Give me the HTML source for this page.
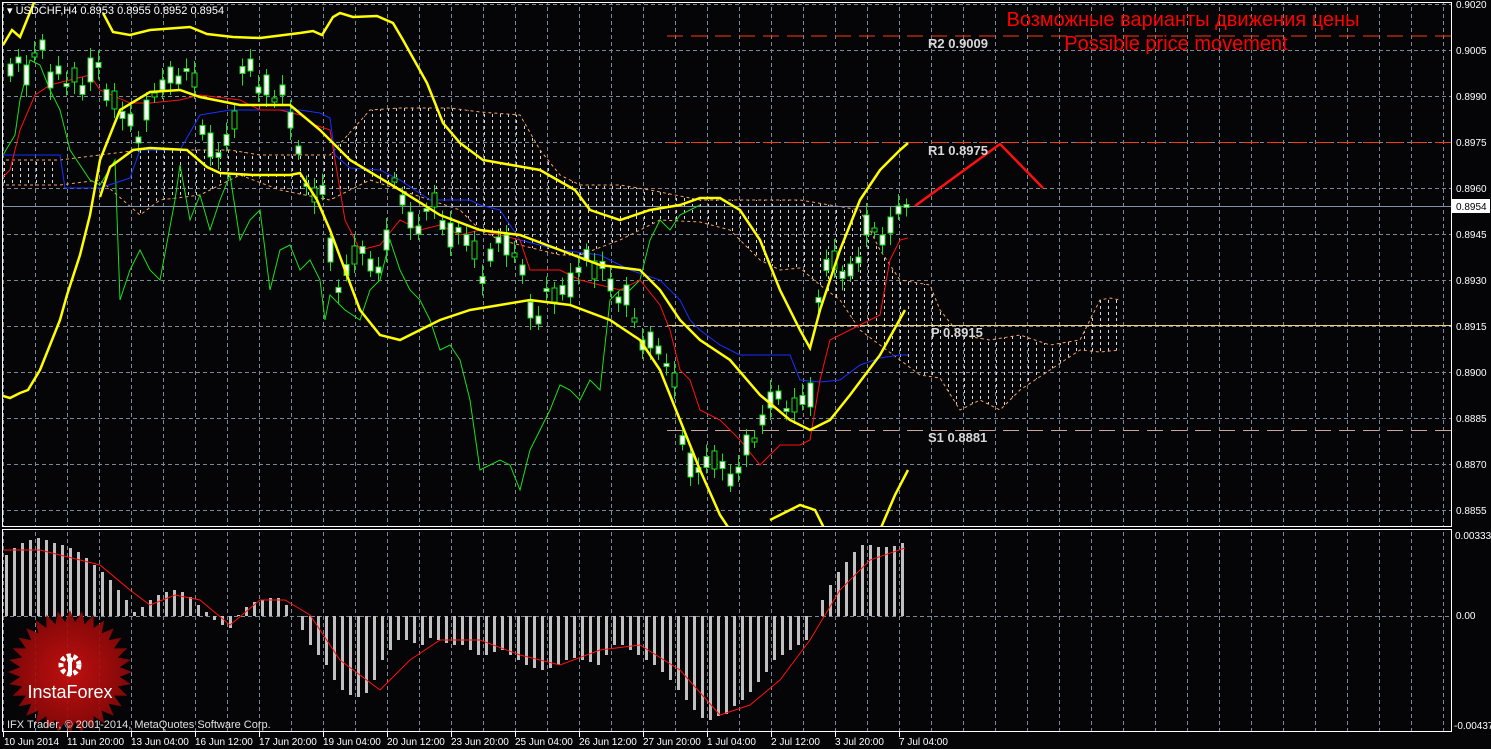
<!DOCTYPE html>
<html><head><meta charset="utf-8"><style>
html,body{margin:0;padding:0;background:#000;width:1491px;height:749px;overflow:hidden}
svg{display:block}
text{font-family:"Liberation Sans",sans-serif}
</style></head><body>
<svg id="s" width="1491" height="749" viewBox="0 0 1491 749" xmlns="http://www.w3.org/2000/svg">
<defs>
<pattern id="vg" x="3" y="0" width="32" height="749" patternUnits="userSpaceOnUse"><line x1="0.5" y1="0" x2="0.5" y2="749" stroke="#7a8899" stroke-dasharray="4,3"/></pattern>
<pattern id="hg" x="0" y="4" width="1491" height="46" patternUnits="userSpaceOnUse"><line x1="0" y1="0.5" x2="1491" y2="0.5" stroke="#7a8899" stroke-dasharray="4,3"/></pattern>
<pattern id="hatch" x="0" y="0" width="8" height="749" patternUnits="userSpaceOnUse"><line x1="4.5" y1="0" x2="4.5" y2="749" stroke="#d8d8d8" stroke-dasharray="3,3"/></pattern>
<radialGradient id="rg"><stop offset="0" stop-color="#d01010"/><stop offset="1" stop-color="#8a0808"/></radialGradient>
<clipPath id="mc"><rect x="3" y="3" width="1448" height="523"/></clipPath>
<clipPath id="dc"><rect x="3" y="530" width="1448" height="201"/></clipPath>
</defs>
<rect width="1491" height="749" fill="#050407"/>
<rect x="3" y="3" width="1448" height="523" fill="url(#vg)"/>
<rect x="3" y="3" width="1448" height="523" fill="url(#hg)"/>
<rect x="3" y="530" width="1448" height="201" fill="url(#vg)"/>
<line x1="3" y1="616.5" x2="1451" y2="616.5" stroke="#7a8899" stroke-dasharray="4,3"/>
<g clip-path="url(#mc)">
<polygon fill="url(#hatch)" points="370,110 400,108 450,108 480,112 520,115 540,150 560,175 580,185 620,185 650,190 700,200 760,200 800,200 830,205 860,210 880,250 900,280 930,285 940,310 960,335 990,340 1020,335 1050,345 1080,340 1100,300 1110,298 1120,300 1120,350 1100,352 1080,350 1050,370 1020,390 1000,410 980,400 960,410 940,378 920,375 900,360 880,345 860,330 840,300 820,285 800,268 780,270 760,260 730,230 700,222 660,220 620,240 580,255 560,255 540,250 500,240 480,230 460,210 430,200 400,190 370,180"/>
<polygon fill="url(#hatch)" points="140,150 200,150 230,150 260,155 330,155 370,110 370,180 330,200 280,190 240,175 200,195 160,200 140,215"/>
<polygon fill="url(#hatch)" points="0,160 60,160 60,185 0,185"/>
<polyline fill="none" stroke="#f4a460" stroke-dasharray="3,3" points="0,160 60,160 140,150 200,150 230,150 260,155 330,155 370,110 400,108 450,108 480,112 520,115 540,150 560,175 580,185 620,185 650,190 700,200 760,200 800,200 830,205 860,210 880,250 900,280 930,285 940,310 960,335 990,340 1020,335 1050,345 1080,340 1100,300 1110,298 1120,300"/>
<polyline fill="none" stroke="#f4a460" stroke-dasharray="3,3" points="0,185 60,185 100,180 140,215 160,200 200,195 240,175 280,190 330,200 370,180 400,190 430,200 460,210 480,230 500,240 540,250 560,255 580,255 620,240 660,220 700,222 730,230 760,260 780,270 800,268 820,285 840,300 860,330 880,345 900,360 920,375 940,378 960,410 980,400 1000,410 1020,390 1050,370 1080,350 1100,352 1120,350"/>
<line x1="667" y1="36" x2="1451" y2="36" stroke="#ff3a10" stroke-dasharray="16,8"/>
<line x1="667" y1="142.5" x2="1451" y2="142.5" stroke="#ff3a10" stroke-dasharray="16,8"/>
<line x1="667" y1="325.5" x2="1451" y2="325.5" stroke="#f0d070"/>
<line x1="667" y1="430.5" x2="1451" y2="430.5" stroke="#c8a898" stroke-dasharray="16,8"/>
<line x1="3" y1="206.5" x2="1451" y2="206.5" stroke="#8090a8"/>
<polyline fill="none" stroke="#18e018" points="0,160 15,135 20,100 30,60 40,65 50,90 60,110 70,150 90,180 100,185 115,160 120,300 130,270 140,250 150,270 160,280 175,200 180,165 190,220 200,195 210,230 220,200 230,175 240,240 250,220 260,210 270,290 280,250 290,245 300,270 310,260 320,280 325,320 330,295 345,310 360,320 370,290 380,280 390,240 400,270 410,290 420,300 430,320 440,350 450,345 460,360 470,400 480,470 490,465 500,460 510,465 520,490 530,450 540,430 550,410 560,385 570,390 580,400 590,380 600,390 610,300 620,290 630,290 640,280 650,240 660,220 670,230 680,215 700,205"/>
<polyline fill="none" stroke="#1830ff" points="0,155 60,155 65,188 100,188 130,178 140,150 180,150 200,115 230,110 300,110 320,113 330,118 335,155 350,168 380,170 400,180 430,200 470,200 480,205 500,210 520,240 540,245 560,250 600,255 630,270 660,280 680,300 690,320 700,330 720,345 740,355 790,355 800,380 820,382 840,380 860,365 880,358 900,355 908,355"/>
<polyline fill="none" stroke="#ff1010" points="0,180 10,170 20,130 35,95 50,85 70,80 90,75 100,90 130,103 150,103 180,100 200,95 240,100 260,110 280,110 300,115 315,125 330,130 345,220 360,250 380,245 400,220 420,230 440,225 460,235 480,230 500,235 520,240 530,270 560,270 580,280 600,285 620,290 640,280 660,305 670,330 680,370 690,380 700,410 720,420 740,440 760,465 780,445 800,445 810,440 820,380 830,340 850,330 870,320 880,315 890,260 900,240 908,238"/>
<g id="candles"></g>
<g fill="none" stroke="#ffff00" stroke-width="2.5">
<polyline points="3,45 12,30 20,37 35,0"/>
<polyline points="103,13 113,32 130,35 150,30 190,27 207,34 233,37 260,38 300,33 313,31 322,35 333,17 340,13 353,17 377,16 393,23 403,40 427,83 443,123 460,143 483,160 500,163 540,170 575,190 590,210 620,220 650,210 680,205 700,198 720,198 740,210 760,240 780,290 800,330 810,348 820,310 840,250 860,200 880,170 900,150 908,143"/>
<polyline points="3,396 10,398 20,393 28,390 40,370 50,345 60,320 67,295 80,255 90,215 100,160 120,110 150,92 180,90 200,97 240,105 290,105 320,130 350,160 400,190 440,215 480,230 520,235 560,250 600,265 640,270 660,290 680,320 700,340 730,360 760,395 790,420 810,430 830,420 850,395 880,355 905,310"/>
<polyline points="100,197 110,167 133,150 150,148 187,150 207,167 220,173 253,175 290,175 300,173 317,200 330,230 345,270 360,310 380,335 400,340 440,320 470,310 500,305 530,300 570,305 610,320 640,340 660,370 680,420 700,470 720,515 730,530"/>
<polyline points="770,520 800,505 815,510 825,530"/>
<polyline points="880,530 895,495 908,470"/>
</g>
<polyline fill="none" stroke="#ff1010" stroke-width="2.5" points="915,206 1000,144 1043,188"/>
</g>
<g font-family="Liberation Mono,monospace" font-weight="bold" font-size="13" fill="#d8d8d8">
<text x="928" y="48">R2 0.9009</text>
<text x="928" y="155">R1 0.8975</text>
<text x="931" y="337">P 0.8915</text>
<text x="928" y="442">S1 0.8881</text>
</g>
<text x="1183" y="26" font-size="20" fill="#ff0000" text-anchor="middle">Возможные варианты движения цены</text>
<text x="1176" y="50" font-size="20" fill="#ff0000" text-anchor="middle">Possible price movement</text>
<g clip-path="url(#dc)"><path id="hist" stroke="#c0c0c0" stroke-width="3" fill="none"/>
<polyline fill="none" stroke="#ff1010" points="0,550 40,550 100,565 130,590 150,605 175,595 200,600 230,625 260,600 285,600 310,615 340,660 380,690 410,660 440,640 480,640 520,655 560,665 600,650 640,645 680,670 720,715 750,705 780,680 810,640 840,590 870,560 905,548"/></g>
<polygon id="star" fill="url(#rg)" opacity="0.92"/>
<g fill="#fff" transform="translate(70,665)">
<circle r="9" fill="none" stroke="#fff" stroke-width="5" stroke-dasharray="4,2.5"/>
<rect x="-2" y="-4" width="4" height="14"/><circle r="3" cy="-5"/>
</g>
<text x="70" y="698" font-size="18" fill="#fff" text-anchor="middle">InstaForex</text>
<text x="7" y="728" font-size="11" fill="#e0e0e0">IFX Trader, © 2001-2014, MetaQuotes Software Corp.</text>
<text x="7" y="14" font-size="11" fill="#fff">▾ USDCHF,H4  0.8953 0.8955 0.8952 0.8954</text>
<rect x="2.5" y="2.5" width="1449" height="524" fill="none" stroke="#fff"/>
<rect x="2.5" y="529.5" width="1449" height="202" fill="none" stroke="#fff"/>
<g id="ticks" stroke="#fff"></g>
<g font-size="10" fill="#fff">
<text x="1456" y="8">0.9020</text><text x="1456" y="54">0.9005</text><text x="1456" y="100">0.8990</text><text x="1456" y="146">0.8975</text><text x="1456" y="192">0.8960</text><text x="1456" y="238">0.8945</text><text x="1456" y="284">0.8930</text><text x="1456" y="330">0.8915</text><text x="1456" y="376">0.8900</text><text x="1456" y="422">0.8885</text><text x="1456" y="468">0.8870</text><text x="1456" y="514">0.8855</text>
<text x="1455" y="539">0.00333</text><text x="1456" y="619">0.00</text><text x="1454" y="729">-0.00437</text>
</g>
<rect x="1452" y="199" width="38" height="14" fill="#fff"/><text x="1456" y="210" font-size="10" fill="#000">0.8954</text>
<g font-size="10" fill="#fff" id="dates"></g>
</svg>
<script>
var mids=[70,60,75,55,45,80,70,85,75,90,70,65,95,100,115,120,140,110,95,85,75,80,70,80,130,145,155,140,120,70,65,90,85,100,90,120,150,185,195,190,250,290,270,255,250,265,270,240,180,200,220,230,210,200,225,235,230,240,250,280,255,240,245,255,270,310,320,290,295,290,285,270,255,270,265,285,300,295,320,345,340,350,365,380,440,465,470,462,460,465,480,470,445,440,420,400,395,410,405,400,395,300,265,260,275,270,260,225,230,240,225,210,206];
var hs=[12,6,20,4,10,16,8,3,14,9,24,5,11,18,7];
var g=document.getElementById('candles'),w="";
for(var i=0;i<mids.length;i++){var x=10+8*i,m=mids[i],h=hs[i%15];
if(i==mids.length-1)h=3;
w+='<line x1="'+(x+.5)+'" y1="'+(m-h/2-6-(i%4)*2)+'" x2="'+(x+.5)+'" y2="'+(m+h/2+6+(i%3)*3)+'" stroke="#18e018"/>';
w+='<rect x="'+(x-2)+'" y="'+(m-h/2)+'" width="5" height="'+h+'" fill="'+(i%5==3?'#000':'#fff')+'" stroke="#18e018"/>';}
g.innerHTML=w;
var hv=[555,548,543,540,538,540,543,545,548,552,558,565,572,580,590,600,612,607,600,595,592,590,592,597,605,612,620,625,628,615,607,602,600,598,598,605,616,630,645,655,665,680,690,695,697,693,680,660,650,640,640,643,645,638,640,643,645,645,650,655,655,652,650,655,660,665,668,670,668,665,660,658,660,662,665,655,645,645,650,655,660,665,672,680,690,700,710,718,720,716,714,706,700,692,682,672,660,655,650,645,640,616,600,585,572,562,552,545,545,547,547,546,543];
var d="";for(var i=0;i<hv.length;i++){var x=6.5+8*i;d+="M"+x+" 616V"+hv[i];}
document.getElementById('hist').setAttribute('d',d);
var p=[];for(var k=0;k<64;k++){var a=k*Math.PI/32,r=k%2?50:62;p.push((70+r*Math.cos(a)).toFixed(1)+","+(672+r*Math.sin(a)).toFixed(1));}
document.getElementById('star').setAttribute('points',p.join(" "));
var dl=["10 Jun 2014","11 Jun 20:00","13 Jun 04:00","16 Jun 12:00","17 Jun 20:00","19 Jun 04:00","20 Jun 12:00","23 Jun 20:00","25 Jun 04:00","26 Jun 12:00","27 Jun 20:00","1 Jul 04:00","2 Jul 12:00","3 Jul 20:00","7 Jul 04:00"];
var dg=document.getElementById('dates'),tg=document.getElementById('ticks'),s="",t="";
for(var i=0;i<dl.length;i++){var x=3+64*i;s+='<text x="'+(x+(i?0:1))+'" y="745">'+dl[i]+'</text>';t+='<line x1="'+(x+.5)+'" y1="732" x2="'+(x+.5)+'" y2="737"/>';}
dg.innerHTML=s;tg.innerHTML=t;
</script>
</body></html>
